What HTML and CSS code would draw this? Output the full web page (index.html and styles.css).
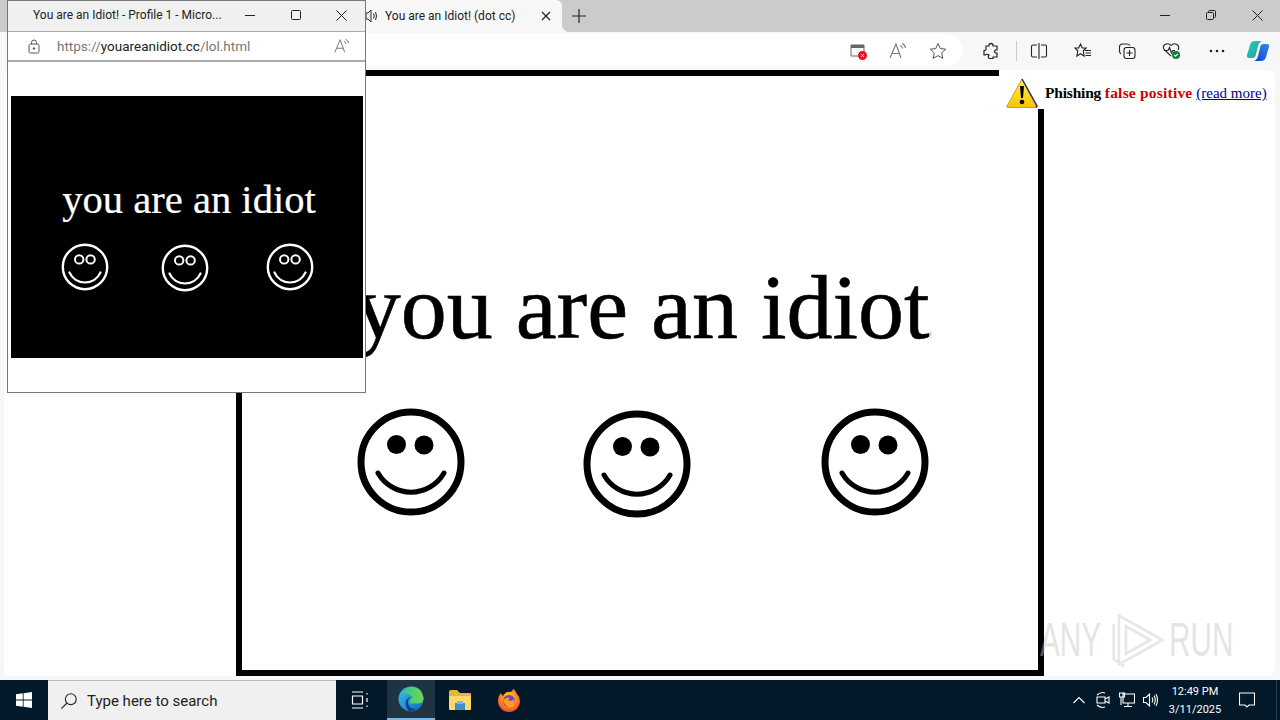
FILE: index.html
```html
<!DOCTYPE html>
<html lang="en">
<head>
    <meta charset="UTF-8">
    <title>You are an Idiot! (dot cc)</title>
    <link rel="stylesheet" href="styles.css">
</head>
<body>
    <svg class="defs" width="0" height="0">
        <symbol id="smile-big" viewBox="-56 -56 112 112">
            <circle r="50" fill="none" stroke="#000" stroke-width="7"/>
            <circle cx="-14.5" cy="-17.5" r="9.5"/>
            <circle cx="13" cy="-17" r="9.5"/>
            <path d="M-33 11A38 38 0 0 0 33 11" fill="none" stroke="#000" stroke-width="5" stroke-linecap="round"/>
        </symbol>
        <symbol id="smile-small" viewBox="-25 -25 50 50" fill="none" stroke="#fff">
            <circle r="22.2" stroke-width="2.4"/>
            <circle cx="-5.8" cy="-7.6" r="4.2" stroke-width="2"/>
            <circle cx="5.6" cy="-7.6" r="4.2" stroke-width="2"/>
            <path d="M-15.5 5.5A17 17 0 0 0 15.5 5.5" stroke-width="2.2" stroke-linecap="round"/>
        </symbol>
        <symbol id="read-aloud" viewBox="0 0 20 20" fill="none" stroke="#777" stroke-width="1.1">
            <path d="M2 17L8 3L13 17M4 12.5H11.5"/>
            <path d="M12 4.5Q14 5 14.5 7.5M14 2.5Q17 3.5 17.5 7"/>
        </symbol>
    </svg>

    <div class="browser">
        <div class="tab-strip">
            <div class="tab">
                <svg class="tab-sound" width="14" height="16" viewBox="0 0 14 16" fill="none" stroke="#222" stroke-width="1">
                    <path d="M1 5H3L6 2V14L3 11H1Z"/>
                    <path d="M8.5 5.5Q10 8 8.5 10.5M10.5 4Q12.5 8 10.5 12"/>
                </svg>
                <span class="tab-title">You are an Idiot! (dot cc)</span>
                <svg width="10" height="10" viewBox="0 0 10 10" stroke="#222" stroke-width="1.2"><path d="M1 1L9 9M9 1L1 9"/></svg>
            </div>
            <svg class="new-tab" width="14" height="14" viewBox="0 0 14 14" stroke="#222" stroke-width="1.2"><path d="M7 0V14M0 7H14"/></svg>
            <div class="caption">
                <button><svg width="10" height="10" viewBox="0 0 10 10" stroke="#222"><path d="M0 5.5H10"/></svg></button>
                <button><svg width="10" height="10" viewBox="0 0 10 10" fill="none" stroke="#222"><rect x=".5" y="2.5" width="7" height="7" rx="1"/><path d="M2.5 2.5V1.5Q2.5 .5 3.5 .5H8.5Q9.5 .5 9.5 1.5V6.5Q9.5 7.5 8.5 7.5"/></svg></button>
                <button><svg width="11" height="11" viewBox="0 0 11 11" stroke="#222"><path d="M.5 .5L10.5 10.5M10.5 .5L.5 10.5"/></svg></button>
            </div>
        </div>

        <div class="toolbar">
            <div class="address">
                <svg width="18" height="18" viewBox="0 0 18 18">
                    <path d="M2 3H15V14H2Z" fill="none" stroke="#666"/>
                    <path d="M2 3H15V6H2Z" fill="#666"/>
                    <circle cx="13.5" cy="13.5" r="4.5" fill="#e81123"/>
                    <path d="M12 12L15 15M15 12L12 15" stroke="#fff"/>
                </svg>
                <svg width="20" height="20"><use href="#read-aloud"/></svg>
                <svg width="18" height="18" viewBox="0 0 18 18" fill="none" stroke="#555"><path d="M9 1.5L11.3 6.6L16.7 7.2L12.7 10.9L13.8 16.4L9 13.6L4.2 16.4L5.3 10.9L1.3 7.2L6.7 6.6Z"/></svg>
            </div>
            <div class="tools">
                <svg width="18" height="18" viewBox="0 0 18 18" fill="none" stroke="#222" stroke-width="1.2"><path d="M7 2.5Q9 .5 11 2.5V4H15V8H13.5Q11.5 9.5 13.5 11H15V15H11V16.5H7Q5.5 14 7 13Q5 11.5 3 13H2V8.5Q4.5 8.5 4 6L4 4H7Z"/></svg>
                <span class="tool-sep"></span>
                <svg width="18" height="18" viewBox="0 0 18 18" fill="none" stroke="#222" stroke-width="1.1"><path d="M7 3H3Q1.5 3 1.5 4.5V13.5Q1.5 15 3 15H7M11 3H15Q16.5 3 16.5 4.5V13.5Q16.5 15 15 15H11M9 1V17"/></svg>
                <svg width="18" height="18" viewBox="0 0 18 18" fill="none" stroke="#222" stroke-width="1.1"><path d="M6.5 2L8.3 6H12L9.2 9L10.2 14L6.5 11.7L2.8 14L3.8 9L1 6H4.7ZM11 8.5H17M11.5 11H17M11.5 13.5H17"/></svg>
                <svg width="18" height="18" viewBox="0 0 18 18" fill="none" stroke="#222" stroke-width="1.1"><rect x="6" y="5.5" width="11" height="11" rx="2.5"/><path d="M11.5 8V14M8.5 11H14.5M3 12Q1.5 11 1.5 9V5Q1.5 2 4.5 2H9Q11 2 12 3.5"/></svg>
                <svg width="20" height="18" viewBox="0 0 20 18" fill="none" stroke="#222" stroke-width="1.1"><path d="M9 14L2.5 8Q0 4.5 3 2.5Q6.5 .5 9 3.5Q11.5 .5 15 2.5Q18 4.5 16 8M2 8.5H6L7.5 5.5L9.5 11L11 8.5H13"/><circle cx="14" cy="13" r="4" fill="#107c41" stroke="none"/><path d="M12.2 13L13.5 14.3L15.8 11.8" stroke="#fff"/></svg>
                <svg width="18" height="18" viewBox="0 0 18 18" fill="#222"><circle cx="3" cy="9" r="1.3"/><circle cx="9" cy="9" r="1.3"/><circle cx="15" cy="9" r="1.3"/></svg>
                <svg class="copilot" width="24" height="24" viewBox="0 0 24 24">
                    <defs>
                        <linearGradient id="cop-a" x1="0" y1="0" x2="1" y2="1"><stop offset="0" stop-color="#2fc7d9"/><stop offset="1" stop-color="#1aa37a"/></linearGradient>
                        <linearGradient id="cop-b" x1="1" y1="0" x2="0" y2="1"><stop offset="0" stop-color="#2c8cf0"/><stop offset="1" stop-color="#1a3fc4"/></linearGradient>
                    </defs>
                    <path d="M9 2H16Q13 3 12 7L9.5 17Q9 19 6 19H3Q.5 19 1 16L4 6Q5 2 9 2Z" fill="url(#cop-a)"/>
                    <path d="M15 22H8Q11 21 12 17L14.5 7Q15 5 18 5H21Q23.5 5 23 8L20 18Q19 22 15 22Z" fill="url(#cop-b)"/>
                </svg>
            </div>
        </div>

        <main class="viewport">
            <div class="idiot-frame">
                <h1 class="idiot-big">you are an idiot<span class="idiot-mark">!</span></h1>
                <div class="smiles-big">
                    <svg width="112" height="112"><use href="#smile-big"/></svg>
                    <svg class="smile-b" width="112" height="112"><use href="#smile-big"/></svg>
                    <svg class="smile-c" width="112" height="112"><use href="#smile-big"/></svg>
                </div>
            </div>
            <div class="notice">
                <svg width="34" height="32" viewBox="0 0 34 32">
                    <defs><linearGradient id="warn" x1="0" y1="0" x2="0" y2="1"><stop offset="0" stop-color="#fff04d"/><stop offset="1" stop-color="#f5c400"/></linearGradient></defs>
                    <path d="M17 2L32 29Q32 30.5 30 30.5H3Q1 30.5 2 29Z" fill="url(#warn)" stroke="#c9a21a"/>
                    <path d="M17 2L32 29L31 30.5" fill="none" stroke="#2b2b70" stroke-width="1.5"/>
                    <path d="M15 9H19L18 21H16Z"/>
                    <circle cx="17" cy="25" r="2.3"/>
                </svg>
                <p><b>Phishing <span class="notice-red">false positive</span></b> <a href="#">(read more)</a></p>
            </div>
            <div class="watermark">
                <span>ANY</span>
                <svg width="54" height="62" viewBox="0 0 62 64" fill="none" stroke="#e6e6e6" stroke-width="3">
                    <path d="M8 4L58 32L8 60Z"/>
                    <path d="M2 14V54L14 62M16 16L44 32L16 48Z"/>
                </svg>
                <span class="watermark-run">RUN</span>
            </div>
        </main>
    </div>

    <footer class="taskbar">
        <div class="start">
            <svg width="16" height="16" viewBox="0 0 16 16" fill="#fff"><path d="M0 2.3L6.8 1.3V7.6H0ZM7.6 1.2L16 0V7.6H7.6ZM0 8.4H6.8V14.7L0 13.7ZM7.6 8.4H16V16L7.6 14.8Z"/></svg>
        </div>
        <div class="search">
            <svg width="18" height="18" viewBox="0 0 20 20" fill="none" stroke="#222" stroke-width="1.2"><circle cx="12" cy="8" r="6"/><path d="M7.5 12.5L1.5 18.5"/></svg>
            <span>Type here to search</span>
        </div>
        <div class="task-btn task-view">
            <svg width="18" height="18" viewBox="0 0 18 18" fill="none" stroke="#fff" stroke-width="1.2"><path d="M1 1H12M1 17H12M1.5 5H11.5V13H1.5ZM16 2V3.5M16 7V11M16 14.5V16"/></svg>
        </div>
        <div class="task-btn task-active">
            <svg width="26" height="26" viewBox="0 0 26 26">
                <defs>
                    <linearGradient id="edge-a" x1="0" y1="0" x2="1" y2="1"><stop offset="0" stop-color="#35c1f1"/><stop offset="1" stop-color="#1266b8"/></linearGradient>
                    <linearGradient id="edge-b" x1="0" y1="0" x2="1" y2="0"><stop offset="0" stop-color="#35c1a0"/><stop offset="1" stop-color="#6fd84f"/></linearGradient>
                </defs>
                <circle cx="13" cy="13" r="12.5" fill="url(#edge-a)"/>
                <path d="M3 8Q8 .5 15 .7Q24 1.5 25.5 12Q26 17 20 17.5H12Q10 13 14.5 11.5Q10 6 3 8Z" fill="url(#edge-b)"/>
                <path d="M14.5 11.5Q9 12 10 18Q12 23.5 19 23Q15 25.5 11 25Q7 21 8 15Q9 11 14.5 11.5Z" fill="#0c3f8c"/>
            </svg>
        </div>
        <div class="task-btn">
            <svg width="24" height="22" viewBox="0 0 24 22">
                <path d="M1 3Q1 1 3 1H9L12 4H22Q23 4 23 5V8H1Z" fill="#e5b53a"/>
                <path d="M1 7H23V20Q23 21 22 21H2Q1 21 1 20Z" fill="#fbd96b"/>
                <path d="M7 14H17V21H7Z" fill="#3f8fd0"/>
                <path d="M9 12H15V15H9Z" fill="#7db8e8"/>
            </svg>
        </div>
        <div class="task-btn">
            <svg width="24" height="24" viewBox="0 0 24 24">
                <defs>
                    <radialGradient id="fox-a" cx=".5" cy=".4" r=".7"><stop offset="0" stop-color="#ffd43b"/><stop offset=".6" stop-color="#ff7a1a"/><stop offset="1" stop-color="#e8264d"/></radialGradient>
                </defs>
                <path d="M16 .5Q19 3 20 6Q23 9 23 13A11 11 0 1 1 1 13Q1 8 4 5Q5 7 6 8Q9 3 13 4Q16 3 16 .5Z" fill="url(#fox-a)"/>
                <circle cx="12" cy="13" r="6" fill="#7b3fc4"/>
                <path d="M6 12Q9 9 13 10Q10 12 13 13Q16 13 17 11Q19 16 15 19Q9 21 6 12Z" fill="#ff9a2b"/>
            </svg>
        </div>
        <div class="tray">
            <svg class="tray-caret" width="12" height="8" viewBox="0 0 12 8" fill="none" stroke="#fff" stroke-width="1.1"><path d="M.5 7L6 1.5L11.5 7"/></svg>
            <svg class="tray-meet" width="14" height="18" viewBox="0 0 14 18" fill="none" stroke="#fff" stroke-width="1.1"><path d="M1 4Q5 .5 9 2M1 14Q5 17.5 9 16M1 6H9V12H1ZM9 8L13 6V12L9 10"/></svg>
            <svg width="16" height="16" viewBox="0 0 16 16" fill="none" stroke="#fff" stroke-width="1.1"><path d="M4 2H15.5V11H4ZM.5 1H5.5V5H.5ZM9 11V14M5 14.5H13M2 5V13"/></svg>
            <svg class="tray-volume" width="16" height="16" viewBox="0 0 16 16" fill="none" stroke="#fff" stroke-width="1.1"><path d="M.5 5.5H3L6.5 2V14L3 10.5H.5ZM9 5.5Q10.5 8 9 10.5M11 3.5Q13.5 8 11 12.5M13 2Q16 8 13 14"/></svg>
            <div class="clock"><span>12:49 PM</span><span>3/11/2025</span></div>
            <svg class="notif" width="16" height="16" viewBox="0 0 16 16" fill="none" stroke="#fff" stroke-width="1.1"><path d="M.5 1H15.5V13H10L8 15L6 13H.5Z"/></svg>
        </div>
    </footer>

    <section class="popup">
        <div class="popup-title">
            <span>You are an Idiot! - Profile 1 - Micro...</span>
            <svg class="popup-min" width="10" height="10" viewBox="0 0 10 10" stroke="#222"><path d="M0 5.5H10"/></svg>
            <svg class="popup-max" width="10" height="10" viewBox="0 0 10 10" fill="none" stroke="#222"><rect x=".5" y=".5" width="9" height="9" rx="1"/></svg>
            <svg class="popup-close" width="11" height="11" viewBox="0 0 11 11" stroke="#222"><path d="M.5 .5L10.5 10.5M10.5 .5L.5 10.5"/></svg>
        </div>
        <div class="popup-address">
            <svg width="12" height="15" viewBox="0 0 12 15" fill="none" stroke="#555"><rect x="1" y="5" width="10" height="9" rx="1.5"/><path d="M3.5 5V3.5Q3.5 1 6 1Q8.5 1 8.5 3.5V5"/><circle cx="6" cy="9.5" r=".8" fill="#555"/></svg>
            <span class="popup-url">https://<b>youareanidiot.cc</b>/lol.html</span>
            <svg width="18" height="18"><use href="#read-aloud"/></svg>
        </div>
        <div class="popup-page">
            <div class="idiot-small">
                <h2>you are an idiot</h2>
                <div class="smiles-small">
                    <svg width="50" height="50"><use href="#smile-small"/></svg>
                    <svg class="smile-mid" width="50" height="50"><use href="#smile-small"/></svg>
                    <svg class="smile-last" width="50" height="50"><use href="#smile-small"/></svg>
                </div>
            </div>
        </div>
    </section>
</body>
</html>
```

FILE: styles.css
```css
/* General Reset */
* {
    margin: 0;
    padding: 0;
    box-sizing: border-box;
}
body {
    position: relative;
    width: 1280px;
    height: 720px;
    overflow: hidden;
    font-family: Roboto, "Open Sans", sans-serif;
    color: #222;
    background: #f7f7f7;
    display: flex;
    flex-direction: column;
}
.defs {
    position: absolute;
}
/* Browser window */
.browser {
    height: 680px;
    background-color: #f7f7f7;
    display: flex;
    flex-direction: column;
}
.tab-strip {
    height: 32px;
    background-color: #cbcbcb;
    display: flex;
    align-items: center;
}
.tab {
    position: relative;
    height: 32px;
    width: 212px;
    margin-left: 350px;
    padding: 0 11px 1px 15px;
    background-color: #f7f7f7;
    border-radius: 0 6px 0 0;
    display: flex;
    align-items: center;
    font-size: 12px;
}
/* curve where the tab meets the toolbar */
.tab::after {
    content: "";
    position: absolute;
    right: -8px;
    bottom: 0;
    width: 8px;
    height: 8px;
    background: radial-gradient(circle at 100% 0, #cbcbcb 8px, #f7f7f7 8.5px);
}
.tab-title {
    flex: 1;
    margin-left: 6px;
}
.new-tab {
    margin-left: 10px;
}
.caption {
    margin-left: auto;
    display: flex;
}
.caption button {
    width: 46px;
    height: 32px;
    padding-bottom: 2px;
    border: none;
    background: transparent;
    display: flex;
    align-items: center;
    justify-content: center;
}
/* Toolbar */
.toolbar {
    height: 36px;
    display: flex;
    align-items: center;
}
.address {
    width: 923px;
    height: 32px;
    margin-left: 40px;
    padding: 1px 16px 0 0;
    background-color: #fff;
    border-radius: 0 16px 16px 0;
    display: flex;
    align-items: center;
    justify-content: flex-end;
    gap: 21px;
}
.tools {
    flex: 1;
    padding: 2px 10px 0 19px;
    display: flex;
    align-items: center;
    gap: 26px;
}
.tool-sep {
    width: 1px;
    height: 20px;
    margin: 0 -13px 0 -10px;
    background-color: #ccc;
}
.copilot {
    margin-left: -6px;
}
/* Page area */
.viewport {
    position: relative;
    height: 606px;
    margin: 2px 5px 4px 4px;
    background-color: #fff;
    border-radius: 8px;
    overflow: hidden;
}
.idiot-frame {
    width: 808px;
    height: 606px;
    margin-left: 232px;
    border: 6px solid #000;
    padding-top: 179px;
    text-align: center;
}
.idiot-big {
    padding-left: 7px;
    font-family: "Liberation Serif", serif;
    font-weight: normal;
    font-size: 92px;
    line-height: 104px;
    color: #000;
    -webkit-text-stroke: 0.6px #000;
}
.idiot-mark {
    font-size: 8px;
    line-height: 0;
    color: #999;
    -webkit-text-stroke: 0;
}
.smiles-big {
    height: 112px;
    margin-top: 47px;
    padding-left: 113px;
    display: flex;
    align-items: flex-start;
}
.smile-b { margin: 2px 0 0 114px; }
.smile-c { margin-left: 126px; }
.notice {
    position: absolute;
    top: 0;
    left: 995px;
    width: 276px;
    height: 39px;
    padding: 7px 0 0 6px;
    background-color: #fff;
    display: flex;
    align-items: flex-start;
    gap: 6px;
    font-family: "Liberation Serif", serif;
    font-size: 15.5px;
}
.notice p {
    padding-top: 7px;
    white-space: nowrap;
    color: #000;
}
.notice b {
    letter-spacing: -0.2px;
}
.notice-red {
    color: #d40000;
    letter-spacing: 0.2px;
}
.notice a {
    font-size: 15px;
    color: #000090;
}
.watermark {
    position: absolute;
    left: 1036px;
    top: 538px;
    display: flex;
    align-items: center;
    gap: 10px;
    font-family: "Liberation Sans", sans-serif;
    font-size: 48px;
    line-height: 64px;
    color: rgba(195, 195, 195, 0.45);
    white-space: nowrap;
}
.watermark span {
    width: 62px;
    transform: scaleX(0.62);
    transform-origin: left center;
}
.watermark-run {
    margin-left: -7px;
}
/* Taskbar */
.taskbar {
    height: 40px;
    background-color: #03192a;
    display: flex;
    align-items: stretch;
    color: #fff;
}
.start {
    width: 48px;
    display: flex;
    align-items: center;
    justify-content: center;
}
.search {
    width: 288px;
    padding-left: 12px;
    background-color: #f0f0f0;
    border-top: 1px solid #bbb;
    display: flex;
    align-items: center;
    gap: 9px;
    color: #222;
    font-size: 15px;
}
.task-btn {
    width: 49px;
    display: flex;
    align-items: center;
    justify-content: center;
}
.task-view {
    width: 51px;
    padding-right: 3px;
}
.task-active {
    width: 48px;
    background-color: #1f3443;
    border-bottom: 2px solid #76b9ed;
}
.tray {
    margin: 0 3px 0 auto;
    padding-right: 21px;
    border-right: 1px solid #2a3c4a;
    display: flex;
    align-items: center;
    gap: 8px;
}
.tray-caret { margin-right: 3px; }
.tray-meet { margin-right: 1px; }
.tray-volume { margin-right: 2px; }
.clock {
    width: 52px;
    display: flex;
    flex-direction: column;
    align-items: center;
    gap: 5px;
    font-size: 11px;
    white-space: nowrap;
}
.notif {
    margin-left: 10px;
}
/* Popup window */
.popup {
    position: absolute;
    left: 7px;
    top: 0;
    width: 359px;
    height: 393px;
    background-color: #fff;
    border: 1px solid #777;
    display: flex;
    flex-direction: column;
}
.popup-title {
    height: 31px;
    padding: 0 0 2px 25px;
    background-color: #f0f0f0;
    border-bottom: 1px solid #aaa;
    display: flex;
    align-items: center;
    font-size: 12px;
}
.popup-title span {
    width: 212px;
}
.popup-max {
    margin-left: 36px;
}
.popup-close {
    margin-left: 35px;
}
.popup-address {
    height: 30px;
    padding: 0 14px 0 20px;
    border-bottom: 2px solid #aaa;
    display: flex;
    align-items: center;
    font-size: 13.5px;
    color: #777;
}
.popup-url {
    flex: 1;
    margin-left: 17px;
}
.popup-url b {
    font-weight: normal;
    color: #222;
}
.popup-page {
    flex: 1;
    padding: 34px 2px 0 3px;
}
.idiot-small {
    height: 262px;
    padding-top: 81px;
    background-color: #000;
    color: #fff;
    text-align: center;
}
.idiot-small h2 {
    padding-left: 4px;
    font-family: "Liberation Serif", serif;
    font-weight: normal;
    font-size: 40.6px;
    line-height: 46px;
    -webkit-text-stroke: 0.2px #fff;
}
.smiles-small {
    margin-top: 19px;
    padding-left: 49px;
    display: flex;
    align-items: flex-start;
    gap: 50px;
}
.smile-mid {
    margin-top: 1px;
}
.smile-last {
    margin-left: 5px;
}
```
